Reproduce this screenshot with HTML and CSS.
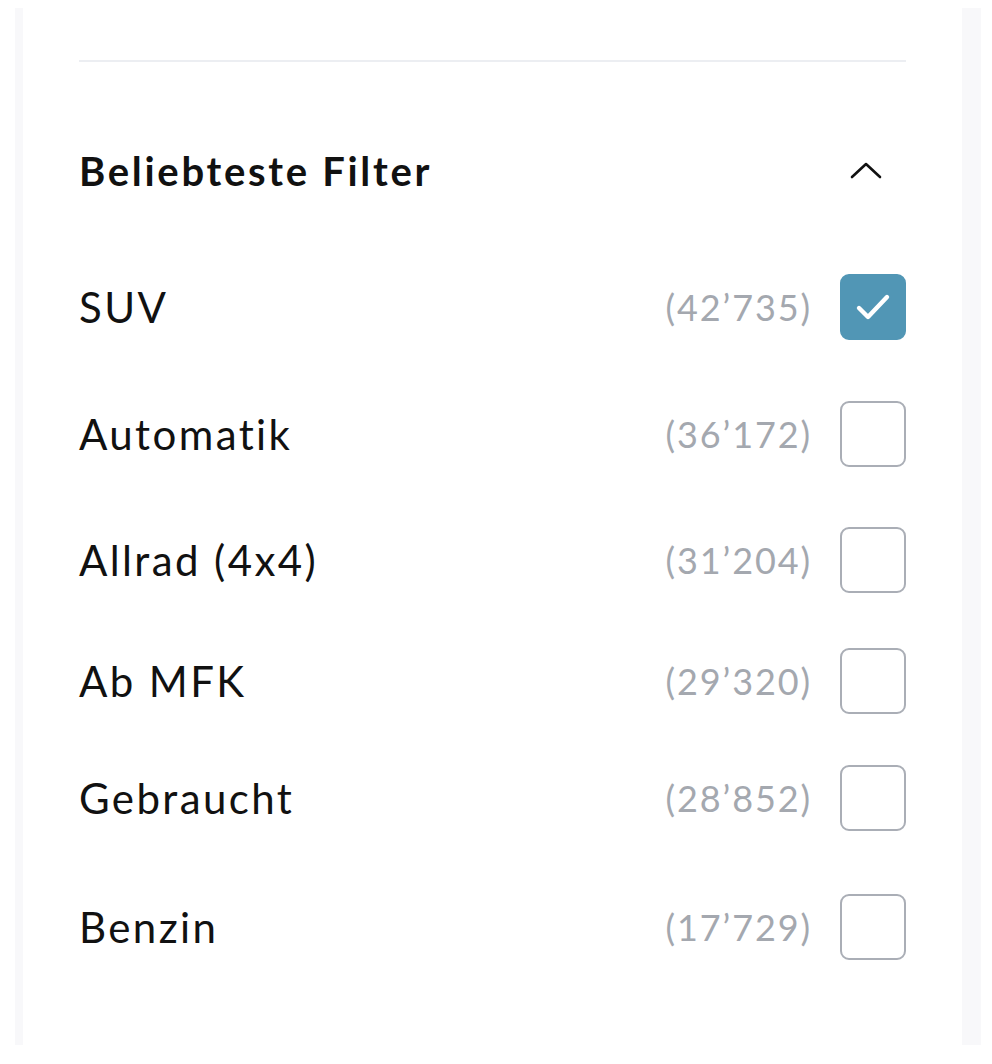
FILE: index.html
```html
<!DOCTYPE html>
<html lang="de">
<head>
<meta charset="utf-8">
<title>Beliebteste Filter</title>
<link rel="stylesheet" href="styles.css">
</head>
<body>
<div class="sidebar">
  <div class="panel">
    <hr class="divider">
    <div class="section-head">
      <h2 class="section-title">Beliebteste Filter</h2>
      <button class="toggle" aria-label="Einklappen">
        <svg width="34" height="20" viewBox="0 0 34 20"><path d="M3 16 L17 3 L31 16" fill="none" stroke="#111" stroke-width="2.6" stroke-linecap="round" stroke-linejoin="round"/></svg>
      </button>
    </div>
    <ul class="filters">
      <li class="filter">
        <span class="label">SUV</span>
        <span class="count">(42’735)</span>
        <span class="box checked"><svg class="check" width="66" height="66" viewBox="0 0 66 66"><path d="M19 34 L28 43 L47 23" fill="none" stroke="#fff" stroke-width="4.4" stroke-linecap="round" stroke-linejoin="round"/></svg></span>
      </li>
      <li class="filter">
        <span class="label">Automatik</span>
        <span class="count">(36’172)</span>
        <span class="box"></span>
      </li>
      <li class="filter">
        <span class="label">Allrad (4x4)</span>
        <span class="count">(31’204)</span>
        <span class="box"></span>
      </li>
      <li class="filter">
        <span class="label">Ab MFK</span>
        <span class="count">(29’320)</span>
        <span class="box"></span>
      </li>
      <li class="filter">
        <span class="label">Gebraucht</span>
        <span class="count">(28’852)</span>
        <span class="box"></span>
      </li>
      <li class="filter">
        <span class="label">Benzin</span>
        <span class="count">(17’729)</span>
        <span class="box"></span>
      </li>
    </ul>
  </div>
</div>
</body>
</html>
```
FILE: styles.css
```css
html, body {
  margin: 0;
  padding: 0;
  background: #fff;
}
body {
  padding: 8px 11px 0 15px;
  font-family: "Lato", "Open Sans", sans-serif;
  color: #111;
}
.sidebar {
  background: #f8f8fa;
  height: 1037px;
  padding: 0 19px 0 8px;
}
.panel {
  background: #fff;
  height: 100%;
  padding: 52px 56px 0 56px;
  box-sizing: border-box;
}
.divider {
  margin: 0;
  border: 0;
  height: 2px;
  background: #eceef2;
}
.section-head {
  display: flex;
  align-items: center;
  justify-content: space-between;
  height: 90px;
  margin-top: 64px;
}
.section-title {
  margin: 0;
  font-size: 40px;
  font-weight: 700;
  letter-spacing: 2.7px;
}
.toggle {
  border: 0;
  background: none;
  padding: 0;
  margin-right: 23px;
  display: flex;
  align-items: center;
}
.filters {
  list-style: none;
  margin: 58px 0 0 0;
  padding: 0;
}
.filter {
  display: flex;
  align-items: center;
  height: 66px;
}
.filter:nth-child(2) { margin-top: 61px; }
.filter:nth-child(3) { margin-top: 60px; }
.filter:nth-child(4) { margin-top: 55px; }
.filter:nth-child(5) { margin-top: 51px; }
.filter:nth-child(6) { margin-top: 63px; }
.label {
  flex: 1;
  font-size: 42px;
  letter-spacing: 2.4px;
}
.count {
  font-size: 36px;
  letter-spacing: 1.9px;
  color: #a4a8af;
  margin-right: 28px;
}
.box {
  position: relative;
  width: 66px;
  height: 66px;
  box-sizing: border-box;
  border: 2px solid #aaaeb6;
  border-radius: 9px;
}
.box.checked {
  background: #5196b5;
  border-color: #5196b5;
}
.check {
  position: absolute;
  left: -2px;
  top: -2px;
}
```
